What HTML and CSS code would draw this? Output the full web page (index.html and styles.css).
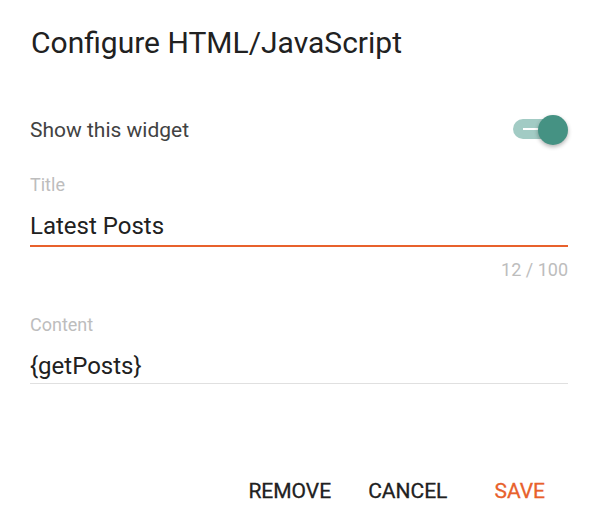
FILE: index.html
```html
<!DOCTYPE html>
<html>
<head>
<meta charset="utf-8">
<link rel="stylesheet" href="styles.css">
</head>
<body>
<div class="dialog">
  <h1 class="heading">Configure HTML/JavaScript</h1>
  <div class="row">
    <span class="row-label">Show this widget</span>
    <span class="toggle"><span class="track"><span class="dash"></span></span><span class="thumb"></span></span>
  </div>
  <div class="field">
    <div class="label">Title</div>
    <div class="value focused">Latest Posts</div>
    <div class="counter">12 / 100</div>
  </div>
  <div class="field field-content">
    <div class="label">Content</div>
    <div class="value">{getPosts}</div>
  </div>
  <div class="actions">
    <span class="btn">REMOVE</span>
    <span class="btn">CANCEL</span>
    <span class="btn primary">SAVE</span>
  </div>
</div>
</body>
</html>
```
FILE: styles.css
```css
html, body { margin: 0; padding: 0; background: #fff; }
body { font-family: Roboto, "Noto Sans", sans-serif; color: #212121; }
.dialog { padding: 25px 31px 0 30px; }
.heading { margin: 0; font-size: 30px; line-height: 36px; font-weight: 400; color: #212121; padding-left: 1px; }
.row { display: flex; align-items: center; justify-content: space-between; margin-top: 51px; height: 36px; }
.row-label { font-size: 21px; line-height: 24px; color: #424242; }
.toggle { position: relative; width: 55px; height: 30px; }
.track { position: absolute; left: 0; top: 4px; width: 44px; height: 20px; border-radius: 10px; background: #a2cbc4; }
.dash { position: absolute; left: 10px; top: 9px; width: 17px; height: 1.5px; background: #fff; }
.thumb { position: absolute; left: 25px; top: 0; width: 30px; height: 30px; border-radius: 50%; background: #459283; box-shadow: 0 2px 4px rgba(0,0,0,0.3); }
.field { margin-top: 25px; }
.label { font-size: 18px; line-height: 24px; color: #bdbdbd; }
.value { font-size: 24px; line-height: 28px; padding: 15px 0 3px; border-bottom: 1px solid #e0e0e0; color: #212121; }
.value.focused { border-bottom: 2px solid #e8612c; padding-bottom: 5px; }
.counter { text-align: right; font-size: 18px; line-height: 24px; margin-top: 11px; color: #bdbdbd; }
.field-content { margin-top: 31px; }
.actions { display: flex; justify-content: flex-end; margin-top: 95px; padding-right: 23px; }
.btn { font-size: 21px; font-weight: 400; line-height: 24px; letter-spacing: 0; color: #212121; -webkit-text-stroke: 0.3px currentColor; }
.btn + .btn { margin-left: 37px; }
.btn.primary { color: #e8612c; margin-left: 47px; }
```
